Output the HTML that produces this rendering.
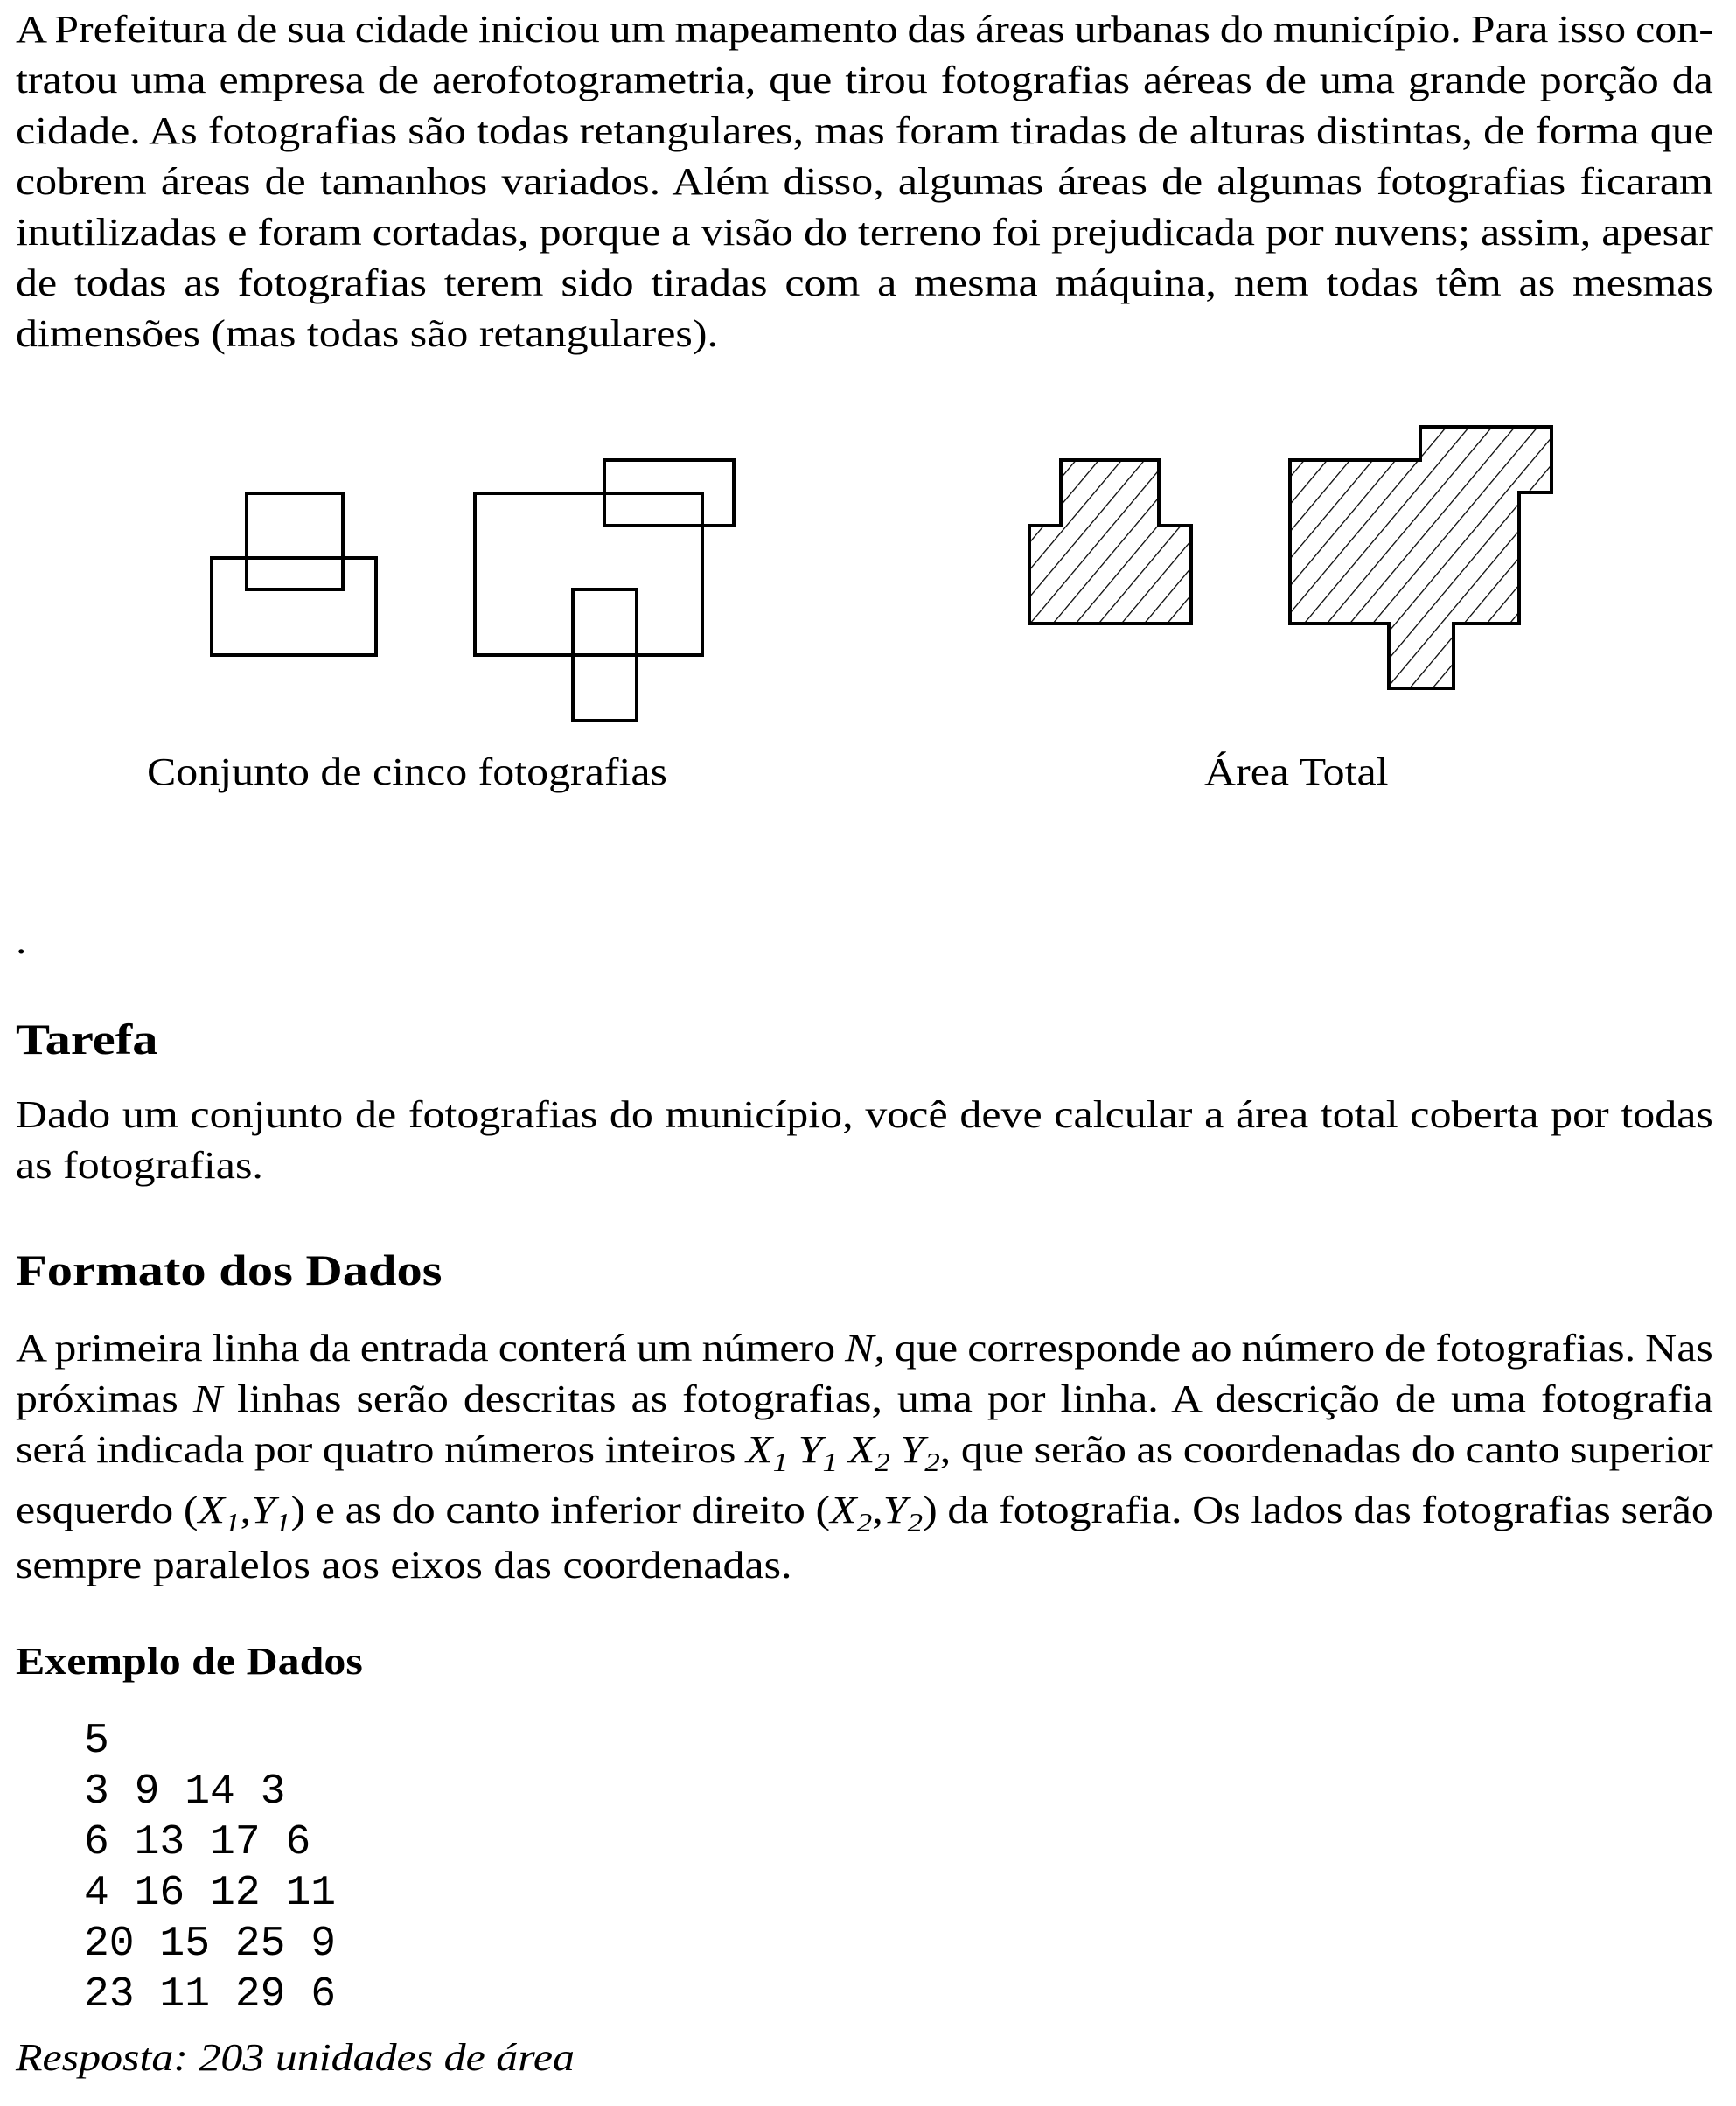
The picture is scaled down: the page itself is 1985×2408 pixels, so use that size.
<!DOCTYPE html>
<html><head><meta charset="utf-8">
<style>
body{margin:0;width:1985px;height:2408px;background:#fff;position:relative;overflow:hidden;font-family:"Liberation Serif",serif;color:#000}
.l{position:absolute;left:18px;width:1710px;font-size:44px;line-height:58px;height:58px;white-space:nowrap;transform:scaleX(1.135);transform-origin:0 0}
.j{text-align:justify;text-align-last:justify;word-spacing:-6px}
.h{position:absolute;left:18px;font-weight:bold;font-size:50px;line-height:58px;white-space:nowrap;transform:scaleX(1.17);transform-origin:0 0}
.m{position:absolute;left:96px;font-family:"Liberation Mono",monospace;font-size:48px;line-height:58px;white-space:pre}
i{font-style:italic}
sub{font-size:31px;vertical-align:-10px;line-height:0}
</style></head><body>
<div class="l j" style="top:5px">A Prefeitura de sua cidade iniciou um mapeamento das áreas urbanas do município. Para isso con-</div>
<div class="l j" style="top:63px">tratou uma empresa de aerofotogrametria, que tirou fotografias aéreas de uma grande porção da</div>
<div class="l j" style="top:121px">cidade. As fotografias são todas retangulares, mas foram tiradas de alturas distintas, de forma que</div>
<div class="l j" style="top:179px">cobrem áreas de tamanhos variados. Além disso, algumas áreas de algumas fotografias ficaram</div>
<div class="l j" style="top:237px">inutilizadas e foram cortadas, porque a visão do terreno foi prejudicada por nuvens; assim, apesar</div>
<div class="l j" style="top:295px">de todas as fotografias terem sido tiradas com a mesma máquina, nem todas têm as mesmas</div>
<div class="l" style="top:353px">dimensões (mas todas são retangulares).</div>

<svg style="position:absolute;left:0;top:0" width="1985" height="900">
<defs><pattern id="hp" patternUnits="userSpaceOnUse" width="20" height="20" patternTransform="rotate(40)"><line x1="0" y1="0" x2="0" y2="20" stroke="#000" stroke-width="2.5"/></pattern></defs>
<g fill="none" stroke="#000" stroke-width="4">
<rect x="242" y="638" width="188" height="111"/>
<rect x="282" y="564" width="110" height="110"/>
<rect x="543" y="564" width="260" height="185"/>
<rect x="691" y="526" width="148" height="75"/>
<rect x="655" y="674" width="73" height="150"/>
<path fill="url(#hp)" d="M1213 526H1325V601H1362V713H1177V601H1213Z"/>
<path fill="url(#hp)" d="M1475 526H1624V488H1774V563H1737V713H1662V787H1588V713H1475Z"/>
</g></svg>
<div class="l" style="top:854px;left:168px;width:600px">Conjunto de cinco fotografias</div>
<div class="l" style="top:854px;left:1377px;width:300px">Área Total</div>
<div class="l" style="top:1047px">.</div>

<div class="h" style="top:1159px">Tarefa</div>
<div class="l j" style="top:1246px">Dado um conjunto de fotografias do município, você deve calcular a área total coberta por todas</div>
<div class="l" style="top:1304px">as fotografias.</div>

<div class="h" style="top:1423px">Formato dos Dados</div>
<div class="l j" style="top:1513px">A primeira linha da entrada conterá um número <i>N</i>, que corresponde ao número de fotografias. Nas</div>
<div class="l j" style="top:1571px">próximas <i>N</i> linhas serão descritas as fotografias, uma por linha. A descrição de uma fotografia</div>
<div class="l j" style="top:1629px">será indicada por quatro números inteiros <i>X<sub>1</sub> Y<sub>1</sub> X<sub>2</sub> Y<sub>2</sub></i>, que serão as coordenadas do canto superior</div>
<div class="l j" style="top:1698px">esquerdo (<i>X<sub>1</sub></i>,<i>Y<sub>1</sub></i>) e as do canto inferior direito (<i>X<sub>2</sub></i>,<i>Y<sub>2</sub></i>) da fotografia. Os lados das fotografias serão</div>
<div class="l" style="top:1761px">sempre paralelos aos eixos das coordenadas.</div>

<div class="l" style="top:1871px;font-weight:bold">Exemplo de Dados</div>
<div class="m" style="top:1962px">5
3 9 14 3
6 13 17 6
4 16 12 11
20 15 25 9
23 11 29 6</div>
<div class="l" style="top:2324px;font-style:italic">Resposta: 203 unidades de área</div>
</body></html>
